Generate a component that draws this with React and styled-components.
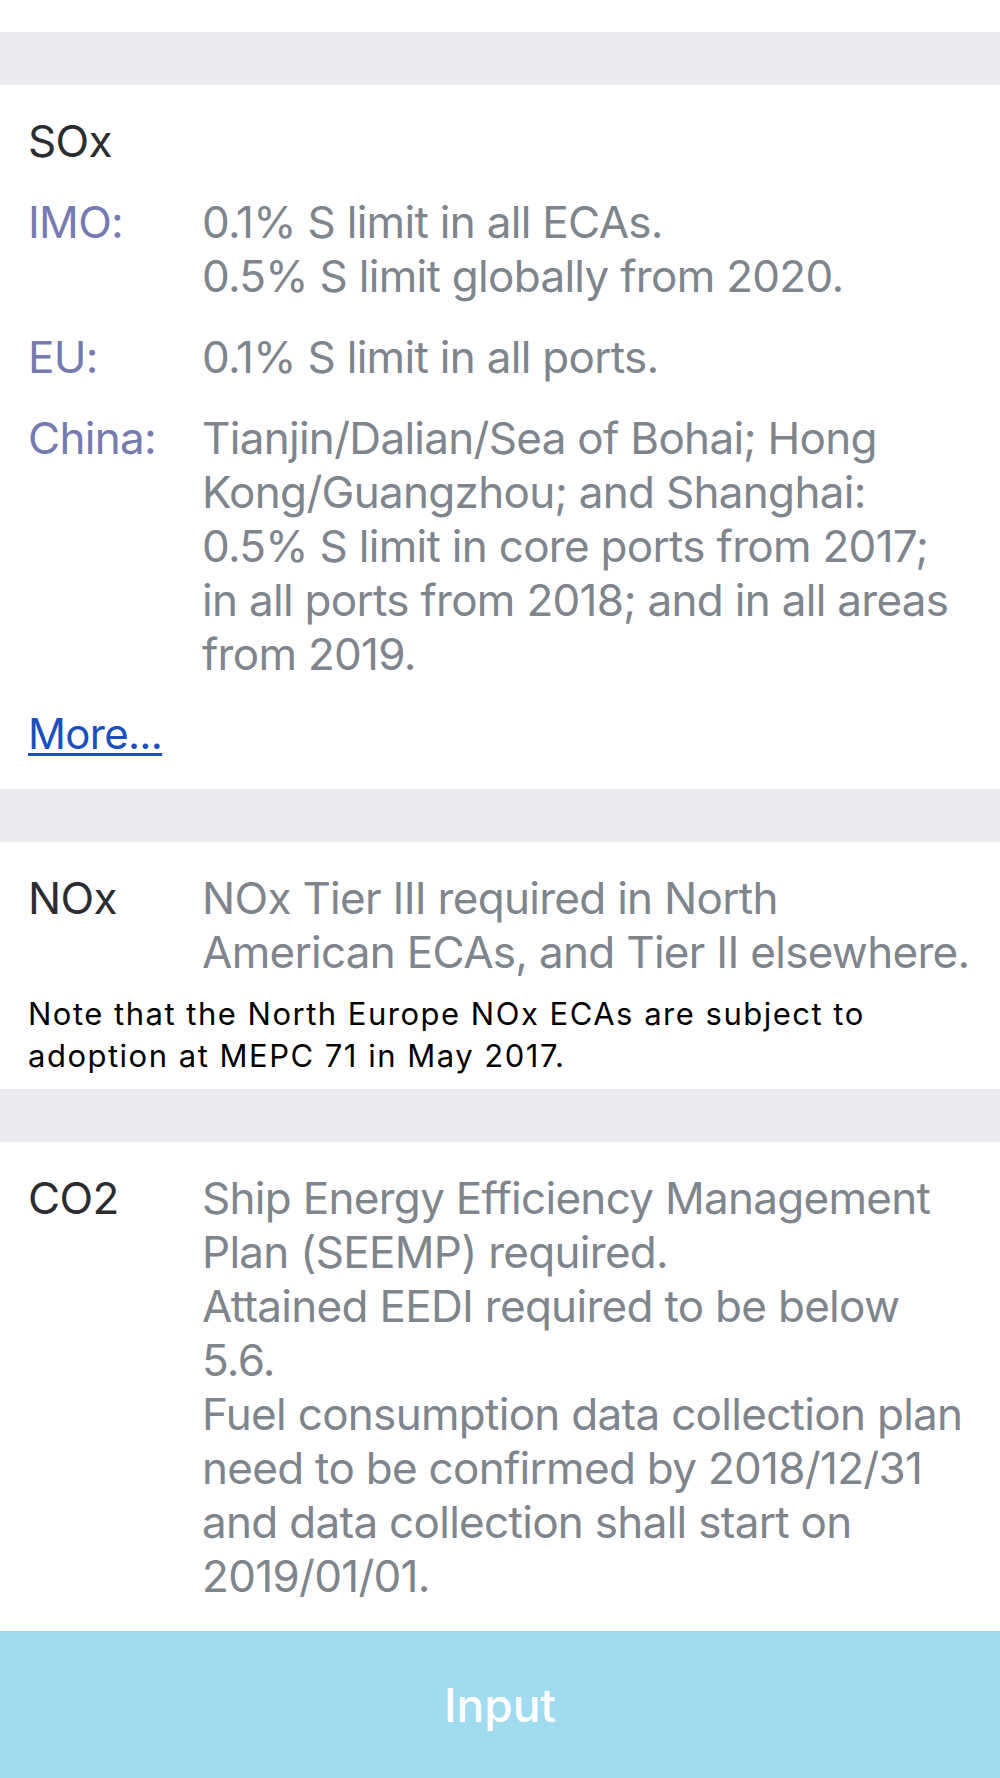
import React from 'react';
import styled, { createGlobalStyle } from 'styled-components';

const GlobalStyle = createGlobalStyle`
  body {
    margin: 0;
    background: #ffffff;
    font-family: Inter, "Open Sans", sans-serif;
    -webkit-font-smoothing: antialiased;
  }
`;

const sox = [
  { label: 'IMO:', lines: ['0.1% S limit in all ECAs.', '0.5% S limit globally from 2020.'] },
  { label: 'EU:', lines: ['0.1% S limit in all ports.'] },
  {
    label: 'China:',
    lines: [
      'Tianjin/Dalian/Sea of Bohai; Hong',
      'Kong/Guangzhou; and Shanghai:',
      '0.5% S limit in core ports from 2017;',
      'in all ports from 2018; and in all areas',
      'from 2019.',
    ],
  },
];

const noxLines = ['NOx Tier III required in North', 'American ECAs, and Tier II elsewhere.'];

const co2Lines = [
  'Ship Energy Efficiency Management',
  'Plan (SEEMP) required.',
  'Attained EEDI required to be below',
  '5.6.',
  'Fuel consumption data collection plan',
  'need to be confirmed by 2018/12/31',
  'and data collection shall start on',
  '2019/01/01.',
];

const App = () => (
  <Page>
    <GlobalStyle />
    <TopSpacer />
    <Separator />
    <Section>
      <Title>SOx</Title>
      <Rows>
        {sox.map(row => (
          <Row key={row.label}>
            <Label>{row.label}</Label>
            <Value>
              {row.lines.map(line => <Line key={line}>{line}</Line>)}
            </Value>
          </Row>
        ))}
      </Rows>
      <MoreLink href="#">More...</MoreLink>
    </Section>
    <Separator />
    <Section bottom={12}>
      <Row>
        <Title as="div">NOx</Title>
        <Value>
          {noxLines.map(line => <Line key={line}>{line}</Line>)}
        </Value>
      </Row>
      <Note>
        Note that the North Europe NOx ECAs are subject to<br />
        adoption at MEPC 71 in May 2017.
      </Note>
    </Section>
    <Separator />
    <Section>
      <Row>
        <Title as="div">CO2</Title>
        <Value>
          {co2Lines.map(line => <Line key={line}>{line}</Line>)}
        </Value>
      </Row>
    </Section>
    <InputButton type="button">Input</InputButton>
  </Page>
);

const Page = styled.div`
  width: 1000px;
  min-height: 1778px;
  display: flex;
  flex-direction: column;
  background: #ffffff;
`;

const TopSpacer = styled.div`
  height: 32px;
  background: #ffffff;
`;

const Separator = styled.div`
  height: 53px;
  background: #ebebf0;
`;

const Section = styled.section`
  display: flex;
  flex-direction: column;
  padding: 29px 28px ${props => props.bottom || 28}px;
  background: #ffffff;
`;

const Title = styled.h2`
  margin: 0;
  width: 174px;
  flex-shrink: 0;
  font-size: 44px;
  line-height: 54px;
  font-weight: 400;
  letter-spacing: -0.7px;
  color: #2b2d31;
`;

const Rows = styled.div`
  display: flex;
  flex-direction: column;
  gap: 27px;
  margin-top: 27px;
`;

const Row = styled.div`
  display: flex;
  align-items: flex-start;
`;

const Label = styled.div`
  width: 174px;
  flex-shrink: 0;
  font-size: 44px;
  line-height: 54px;
  letter-spacing: -0.7px;
  color: #757bb0;
`;

const Value = styled.div`
  display: flex;
  flex-direction: column;
  font-size: 44px;
  line-height: 54px;
  letter-spacing: -0.7px;
  color: #7e858d;
`;

const Line = styled.span`
  white-space: nowrap;
`;

const MoreLink = styled.a`
  align-self: flex-start;
  margin-top: 26px;
  font-size: 42px;
  line-height: 54px;
  letter-spacing: -0.7px;
  color: #1a4fbd;
  text-decoration: underline;
  text-decoration-thickness: 3px;
  text-underline-offset: 4px;
`;

const Note = styled.p`
  margin: 14px 0 0;
  font-size: 31px;
  line-height: 42px;
  letter-spacing: 1.5px;
  white-space: nowrap;
  color: #000000;
`;

const InputButton = styled.button`
  margin-top: auto;
  height: 147px;
  border: none;
  background: #a1dbf0;
  color: #ffffff;
  font-family: inherit;
  font-size: 46px;
  font-weight: 500;
  cursor: pointer;
`;

export default App;
